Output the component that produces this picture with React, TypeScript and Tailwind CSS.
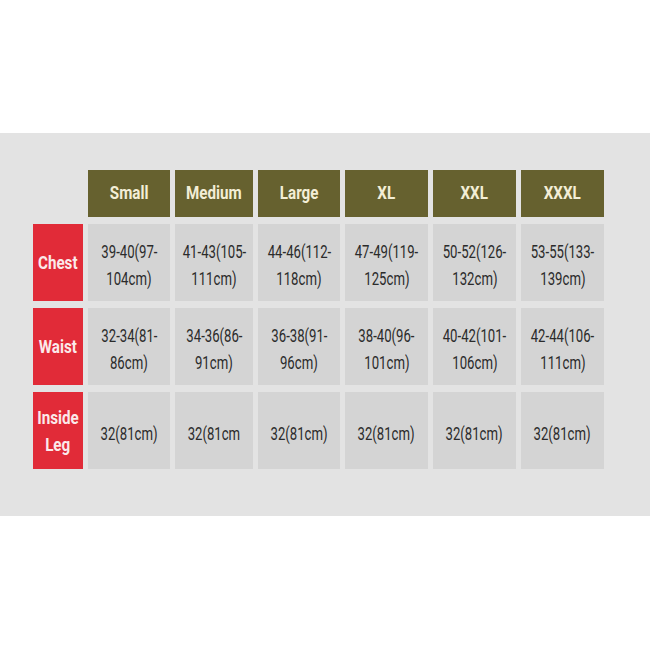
const sizes = ['Small', 'Medium', 'Large', 'XL', 'XXL', 'XXXL'];

const rows = [
  {
    label: ['Chest'],
    values: [
      ['39-40(97-', '104cm)'],
      ['41-43(105-', '111cm)'],
      ['44-46(112-', '118cm)'],
      ['47-49(119-', '125cm)'],
      ['50-52(126-', '132cm)'],
      ['53-55(133-', '139cm)'],
    ],
  },
  {
    label: ['Waist'],
    values: [
      ['32-34(81-', '86cm)'],
      ['34-36(86-', '91cm)'],
      ['36-38(91-', '96cm)'],
      ['38-40(96-', '101cm)'],
      ['40-42(101-', '106cm)'],
      ['42-44(106-', '111cm)'],
    ],
  },
  {
    label: ['Inside', 'Leg'],
    values: [['32(81cm)'], ['32(81cm'], ['32(81cm)'], ['32(81cm)'], ['32(81cm)'], ['32(81cm)']],
  },
];

export default function App() {
  return (
    <div className="w-[650px] h-[650px] bg-white pt-[133px] font-['Roboto',sans-serif]">
      <div className="h-[383px] bg-[#e3e3e3] pl-[33px] pt-[37px]">
        <div className="grid grid-cols-[50px_82px_78px_82px_83px_83px_83px] grid-rows-[47px_77px_77px_77px] gap-x-[5px] gap-y-[7px]">
          <div />
          {sizes.map((s) => (
            <div
              key={s}
              className="bg-[#66612f] text-[#f3eed6] font-bold text-[19px] flex items-center justify-center"
            >
              <span className="inline-block whitespace-nowrap scale-x-[0.8]">{s}</span>
            </div>
          ))}
          {rows.map((row) => (
            <>
              <div
                key={row.label.join('')}
                className="bg-[#e12b38] text-[#fbe9ea] font-bold text-[19px] leading-[27px] flex flex-col items-center justify-center"
              >
                {row.label.map((l) => (
                  <span key={l} className="inline-block whitespace-nowrap scale-x-[0.8]">
                    {l}
                  </span>
                ))}
              </div>
              {row.values.map((v, i) => (
                <div
                  key={i}
                  className="bg-[#d4d4d4] text-[#2b2b2b] text-[18px] leading-[27px] pt-[5px] flex flex-col items-center justify-center"
                >
                  {v.map((line) => (
                    <span key={line} className="inline-block whitespace-nowrap scale-x-[0.73]">
                      {line}
                    </span>
                  ))}
                </div>
              ))}
            </>
          ))}
        </div>
      </div>
    </div>
  );
}
